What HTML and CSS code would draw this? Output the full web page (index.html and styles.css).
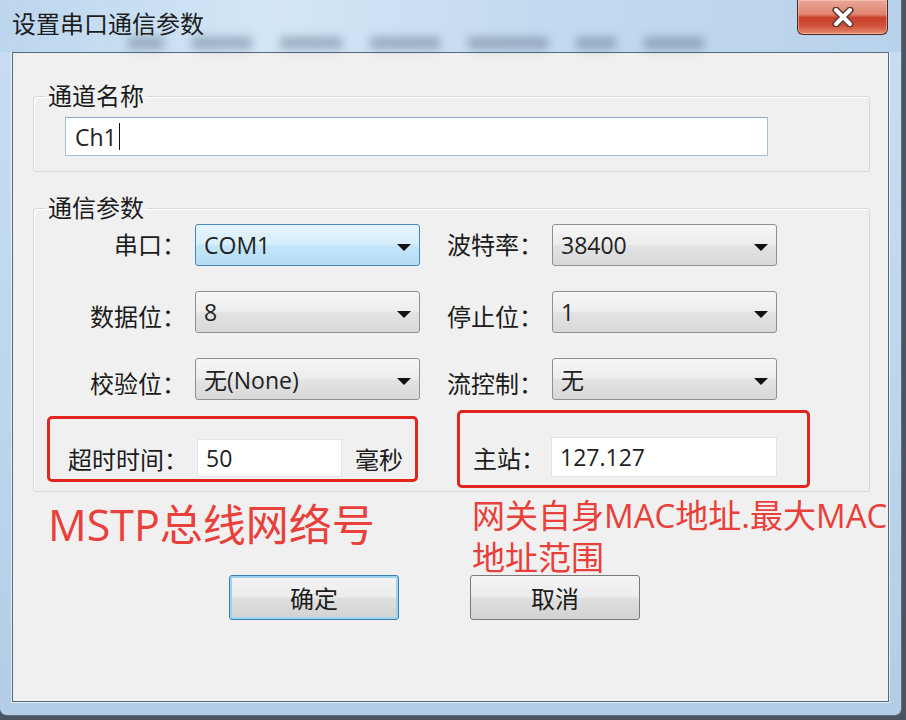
FILE: index.html
```html
<!DOCTYPE html>
<html lang="zh-CN">
<head>
    <meta charset="UTF-8">
    <title>设置串口通信参数</title>
    <link rel="stylesheet" href="styles.css">
</head>
<body>

    <div class="window">
        <div class="titlebar">
            <span class="title">设置串口通信参数</span>
            <!-- blurred desktop behind the glass -->
            <div class="smudges">
                <span class="s1"></span><span class="s2"></span><span class="s3"></span><span class="s4"></span><span class="s5"></span><span class="s6"></span><span class="s7"></span>
            </div>
            <button class="close-btn">
                <svg width="24" height="20" viewBox="0 0 24 20">
                    <path d="M5 3 L19 17 M19 3 L5 17" stroke="#5a3a34" stroke-width="7" stroke-linecap="round"/>
                    <path d="M5 3 L19 17 M19 3 L5 17" stroke="#ffffff" stroke-width="4" stroke-linecap="round"/>
                </svg>
            </button>
        </div>

        <div class="client">
            <fieldset class="group group-name">
                <legend>通道名称</legend>
                <div class="name-field">Ch1<span class="caret"></span></div>
            </fieldset>

            <fieldset class="group group-comm">
                <legend>通信参数</legend>

                <div class="row">
                    <span class="lbl">串口：</span>
                    <div class="combo combo-hot">COM1<span class="arrow"></span></div>
                    <span class="lbl2">波特率：</span>
                    <div class="combo">38400<span class="arrow"></span></div>
                </div>

                <div class="row row-low">
                    <span class="lbl">数据位：</span>
                    <div class="combo">8<span class="arrow"></span></div>
                    <span class="lbl2">停止位：</span>
                    <div class="combo">1<span class="arrow"></span></div>
                </div>

                <div class="row row-low">
                    <span class="lbl">校验位：</span>
                    <div class="combo">无(None)<span class="arrow"></span></div>
                    <span class="lbl2">流控制：</span>
                    <div class="combo">无<span class="arrow"></span></div>
                </div>

                <!-- red marks -->
                <div class="row-mark">
                    <div class="mark mark-left">
                        <span>超时时间：</span>
                        <div class="edit edit-short">50</div>
                        <span class="unit">毫秒</span>
                    </div>
                    <div class="mark mark-right">
                        <span>主站：</span>
                        <div class="edit edit-long">127.127</div>
                    </div>
                </div>
            </fieldset>

            <div class="notes">
                <div class="note note-big">MSTP总线网络号</div>
                <div class="note note-small">网关自身MAC地址.最大MAC<br>地址范围</div>
            </div>

            <div class="buttons">
                <button class="btn btn-default">确定</button>
                <button class="btn">取消</button>
            </div>
        </div>
    </div>

</body>
</html>
```

FILE: styles.css
```css
body {
    margin: 0;
    background-color: #4a5561;
    font-family: "Open Sans", "Noto Sans CJK SC", sans-serif;
    color: #1b1b1b;
}
.window {
    width: 902px;
    height: 716px;
    box-sizing: border-box;
    background: linear-gradient(to bottom, #c9def2 0%, #bcd5ec 60%, #b3cde6 100%);
    border-right: 1px solid #5d6e7d;
    border-bottom: 1px solid #5d6e7d;
    border-radius: 0 0 7px 7px;
    overflow: hidden;
}
.titlebar {
    position: relative;
    height: 52px;
    display: flex;
    align-items: flex-start;
    background: linear-gradient(to right, #bcd6ee 0%, #d4e6f6 30%, #c3daf0 60%, #b8d2eb 100%);
}
.title {
    margin: 10px 0 0 12px;
    font-size: 24px;
    line-height: 28px;
    color: #1c1c1c;
    position: relative;
    z-index: 1;
}
.smudges {
    position: absolute;
    left: 128px;
    top: 37px;
    display: flex;
    gap: 28px;
    filter: blur(5px);
}
.smudges span {
    display: block;
    height: 12px;
    background-color: rgba(70, 90, 112, 0.4);
}
.smudges .s1 { width: 36px; }
.smudges .s2 { width: 60px; }
.smudges .s3 { width: 62px; }
.smudges .s4 { width: 70px; }
.smudges .s5 { width: 80px; }
.smudges .s6 { width: 40px; }
.smudges .s7 { width: 60px; }
.close-btn {
    margin-left: auto;
    margin-right: 13px;
    width: 91px;
    height: 35px;
    padding: 0;
    border: 1px solid #4f2a24;
    border-top: none;
    border-radius: 0 0 6px 6px;
    background: linear-gradient(to bottom, #eaa798 0%, #df8470 42%, #c8412b 52%, #cf4f37 75%, #e58c70 100%);
    box-shadow: inset 0 0 0 1px rgba(255, 210, 200, 0.5);
    display: flex;
    align-items: center;
    justify-content: center;
    position: relative;
    z-index: 1;
}
.client {
    margin-left: 12px;
    width: 877px;
    height: 650px;
    box-sizing: border-box;
    background-color: #f0f0f0;
    border: 1px solid #55677a;
    box-shadow: 0 0 0 1px rgba(255, 255, 255, 0.6);
}
.group {
    margin: 0 0 0 20px;
    width: 837px;
    box-sizing: border-box;
    padding: 0;
    border: 1px solid #d5dade;
    border-radius: 3px;
    box-shadow: inset 1px 1px 0 #ffffff;
}
.group legend {
    margin-left: 12px;
    padding: 0 2px;
    font-size: 24px;
    line-height: 26px;
}
.group-name {
    margin-top: 30px;
}
.name-field {
    margin: 8px 0 15px 31px;
    width: 703px;
    height: 39px;
    box-sizing: border-box;
    padding-left: 9px;
    border: 1px solid #a9bfd3;
    border-top-color: #8ea8bf;
    background-color: #ffffff;
    font-size: 23px;
    display: flex;
    align-items: center;
    color: #222;
}
.caret {
    display: inline-block;
    width: 1px;
    height: 27px;
    margin-left: 2px;
    background-color: #111;
}
.group-comm {
    margin-top: 23px;
    padding-bottom: 3px;
}
.row {
    display: flex;
    align-items: center;
    height: 42px;
    margin-top: 3px;
}
.row + .row {
    margin-top: 25px;
}
.lbl, .lbl2 {
    font-size: 24px;
    line-height: 28px;
}
.lbl {
    width: 152px;
    text-align: right;
}
.lbl2 {
    margin-left: 27px;
    width: 105px;
}
.row-low .lbl, .row-low .lbl2 {
    margin-top: 10px;
}
.combo {
    position: relative;
    margin-left: 9px;
    width: 225px;
    height: 42px;
    box-sizing: border-box;
    padding-left: 8px;
    border: 1px solid #8f9090;
    border-radius: 3px;
    background: linear-gradient(to bottom, #f6f6f6 0%, #ededed 48%, #e3e3e3 52%, #d8d8d8 100%);
    font-size: 23px;
    display: flex;
    align-items: center;
    color: #222;
}
.lbl2 + .combo {
    margin-left: 0;
}
.combo-hot {
    border-color: #4c86b4;
    background: linear-gradient(to bottom, #e6f4fc 0%, #d6eefb 48%, #c4e6fa 52%, #b5dcf4 100%);
}
.arrow {
    position: absolute;
    right: 8px;
    top: 19px;
    width: 0;
    height: 0;
    border-left: 7px solid transparent;
    border-right: 7px solid transparent;
    border-top: 7px solid #111;
}
.row-mark {
    display: flex;
    align-items: center;
    height: 78px;
    margin: 10px 0 0 13px;
    gap: 39px;
}
.mark {
    box-sizing: border-box;
    border: 3px solid #e2261f;
    border-radius: 5px;
    display: flex;
    align-items: center;
    font-size: 24px;
}
.mark-left {
    width: 371px;
    height: 66px;
    padding: 18px 0 0 18px;
}
.mark-right {
    width: 353px;
    height: 78px;
    padding: 16px 0 0 13px;
}
.edit {
    box-sizing: border-box;
    padding-left: 8px;
    border: 1px solid #e4e5ea;
    background-color: #ffffff;
    font-size: 23px;
    display: flex;
    align-items: center;
    color: #222;
}
.edit-short {
    margin-left: 9px;
    width: 145px;
    height: 38px;
}
.edit-long {
    margin-left: 6px;
    width: 226px;
    height: 40px;
}
.unit {
    margin-left: 13px;
}
.notes {
    display: flex;
    align-items: flex-start;
    height: 80px;
    margin-top: 3px;
    color: #e8403a;
}
.note-big {
    margin-left: 35px;
    width: 424px;
    padding-top: 6px;
    font-size: 43px;
    line-height: 48px;
}
.note-small {
    font-size: 33px;
    line-height: 42px;
    white-space: nowrap;
}
.buttons {
    display: flex;
    gap: 71px;
    margin-left: 216px;
}
.btn {
    width: 170px;
    height: 45px;
    padding: 0;
    border: 1px solid #7a7a7a;
    border-radius: 3px;
    background: linear-gradient(to bottom, #f4f4f4 0%, #ececec 48%, #dfdfdf 52%, #d2d2d2 100%);
    font-family: "Open Sans", "Noto Sans CJK SC", sans-serif;
    font-size: 24px;
    color: #1b1b1b;
    cursor: pointer;
}
.btn-default {
    border-color: #3c7fb1;
    box-shadow: inset 0 0 0 2px #9fd3f2;
}
```
